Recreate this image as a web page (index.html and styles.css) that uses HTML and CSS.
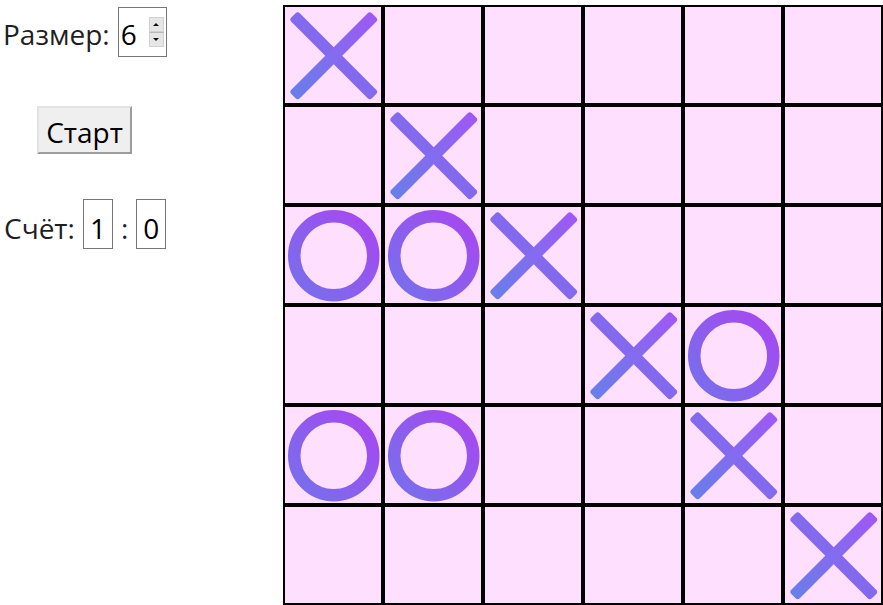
FILE: index.html
```html
<!DOCTYPE html>
<html lang="ru">
<head>
<meta charset="utf-8">
<title>Крестики-нолики</title>
<link rel="stylesheet" href="styles.css">
</head>
<body>
<svg class="defs" width="0" height="0" aria-hidden="true">
  <defs>
    <linearGradient id="gx" x1="0" y1="0" x2="1" y2="0">
      <stop offset="0" stop-color="#687fea"/>
      <stop offset="1" stop-color="#9f58f4"/>
    </linearGradient>
    <linearGradient id="go" x1="0" y1="1" x2="1" y2="0">
      <stop offset="0" stop-color="#7571ec"/>
      <stop offset="1" stop-color="#a846f0"/>
    </linearGradient>
    <symbol id="x" viewBox="0 0 96 96">
      <rect x="-57" y="-6" width="114" height="12" rx="3" fill="#8369ee" transform="translate(48.75 48.75) rotate(45)"/>
      <rect x="-57" y="-6" width="114" height="12" rx="3" fill="url(#gx)" transform="translate(48.75 48.75) rotate(-45)"/>
    </symbol>
    <symbol id="o" viewBox="0 0 96 96">
      <circle cx="48.75" cy="48.75" r="39.5" fill="none" stroke="url(#go)" stroke-width="12.5"/>
    </symbol>
  </defs>
</svg>
<div class="app">
  <div class="controls">
    <div class="size-row">
      <span class="label">Размер:</span>
      <div class="numbox">
        <span class="val">6</span>
        <span class="spin">
          <span class="spin-btn"><span class="tri up"></span></span>
          <span class="spin-btn"><span class="tri down"></span></span>
        </span>
      </div>
    </div>
    <button class="start">Старт</button>
    <div class="score-row">
      <span class="label">Счёт:</span>
      <span class="score">1</span>
      <span class="colon">:</span>
      <span class="score">0</span>
    </div>
  </div>
  <div class="board">
    <div class="cell"><svg class="mark"><use href="#x"/></svg></div>
    <div class="cell"></div>
    <div class="cell"></div>
    <div class="cell"></div>
    <div class="cell"></div>
    <div class="cell"></div>

    <div class="cell"></div>
    <div class="cell"><svg class="mark"><use href="#x"/></svg></div>
    <div class="cell"></div>
    <div class="cell"></div>
    <div class="cell"></div>
    <div class="cell"></div>

    <div class="cell"><svg class="mark"><use href="#o"/></svg></div>
    <div class="cell"><svg class="mark"><use href="#o"/></svg></div>
    <div class="cell"><svg class="mark"><use href="#x"/></svg></div>
    <div class="cell"></div>
    <div class="cell"></div>
    <div class="cell"></div>

    <div class="cell"></div>
    <div class="cell"></div>
    <div class="cell"></div>
    <div class="cell"><svg class="mark"><use href="#x"/></svg></div>
    <div class="cell"><svg class="mark"><use href="#o"/></svg></div>
    <div class="cell"></div>

    <div class="cell"><svg class="mark"><use href="#o"/></svg></div>
    <div class="cell"><svg class="mark"><use href="#o"/></svg></div>
    <div class="cell"></div>
    <div class="cell"></div>
    <div class="cell"><svg class="mark"><use href="#x"/></svg></div>
    <div class="cell"></div>

    <div class="cell"></div>
    <div class="cell"></div>
    <div class="cell"></div>
    <div class="cell"></div>
    <div class="cell"></div>
    <div class="cell"><svg class="mark"><use href="#x"/></svg></div>
  </div>
</div>
</body>
</html>
```
FILE: styles.css
```css
html, body {
  margin: 0;
  padding: 0;
  overflow: hidden;
  background: #ffffff;
}

body {
  font-family: "Open Sans", "Liberation Sans", sans-serif;
  font-size: 28px;
  color: #1f1f1f;
}

.defs {
  position: absolute;
  width: 0;
  height: 0;
  overflow: hidden;
}

.app {
  display: flex;
  align-items: flex-start;
  gap: 117px;
  padding: 5px 0 0 3px;
}

.controls {
  width: 163px;
  margin-top: 2px;
  display: flex;
  flex-direction: column;
  align-items: flex-start;
}

.size-row {
  display: flex;
  align-items: baseline;
  gap: 8px;
}

.label {
  line-height: normal;
}

.numbox {
  box-sizing: border-box;
  width: 49px;
  height: 50px;
  border: 1px solid #767676;
  display: flex;
  align-items: flex-start;
  padding: 0 2px 0 2px;
  background: #fff;
}

.val {
  padding-top: 7px;
  line-height: normal;
  color: #000;
}

.spin {
  margin-left: auto;
  margin-top: 9px;
  width: 15px;
  height: 30px;
  display: flex;
  flex-direction: column;
}

.spin-btn {
  box-sizing: border-box;
  flex: 1;
  background: #e6e6e6;
  border: 1px solid #d2d2d2;
  display: flex;
  align-items: center;
  justify-content: center;
}

.spin-btn + .spin-btn {
  border-top: 1px solid #b8b8b8;
}

.tri {
  width: 0;
  height: 0;
  border-left: 3px solid transparent;
  border-right: 3px solid transparent;
}

.tri.up {
  border-bottom: 3px solid #111;
}

.tri.down {
  border-top: 3px solid #111;
}

.start {
  align-self: center;
  margin-top: 49px;
  box-sizing: border-box;
  width: 95px;
  height: 48px;
  padding: 4px 0 0 0;
  font-family: inherit;
  font-size: 28px;
  line-height: normal;
  color: #000;
  background: #efefef;
  border: 2px solid;
  border-color: #e3e3e3 #9c9c9c #9c9c9c #e3e3e3;
  border-radius: 0;
}

.score-row {
  margin-top: 45px;
  margin-left: 1px;
  display: flex;
  align-items: baseline;
  gap: 8px;
}

.score {
  box-sizing: border-box;
  width: 30px;
  height: 50px;
  border: 1px solid #767676;
  padding-top: 9px;
  line-height: normal;
  text-align: center;
  color: #000;
}

.colon {
  line-height: normal;
}

.board {
  display: grid;
  grid-template-columns: repeat(6, 100px);
  grid-auto-rows: 100px;
}

.cell {
  box-sizing: border-box;
  border: 2px solid #000;
  background: #ffdffe;
}

.mark {
  display: block;
  width: 96px;
  height: 96px;
}
```
